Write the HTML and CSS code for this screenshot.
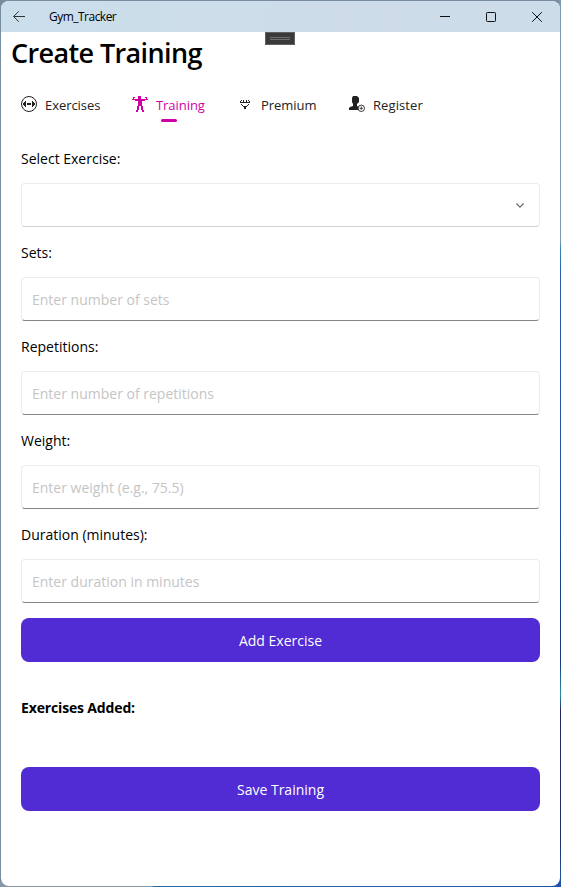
FILE: index.html
```html
<!DOCTYPE html>
<html lang="en">
<head>
<meta charset="utf-8">
<title>Gym_Tracker</title>
<link rel="stylesheet" href="styles.css">
</head>
<body>
<div class="window">
  <header class="titlebar">
    <svg class="back" width="12" height="12" viewBox="0 0 12 12"><path d="M12 5.5H.8M5.8.3.6 5.5l5.2 5.2"/></svg>
    <span class="app-name">Gym_Tracker</span>
    <div class="controls">
      <svg width="10" height="10" viewBox="0 0 10 10"><path d="M0 4.5H10"/></svg>
      <svg width="10" height="10" viewBox="0 0 10 10"><rect x=".5" y=".5" width="9" height="9" rx=".8"/></svg>
      <svg width="10" height="10" viewBox="0 0 10 10"><path d="M.2.2 9.8 9.8M9.8.2.2 9.8"/></svg>
    </div>
  </header>
  <div class="debug-handle"></div>
  <h1>Create Training</h1>
  <nav class="tabs">
    <a class="tab exercises">
      <svg width="16" height="16" viewBox="0 0 16 16"><circle cx="8" cy="8" r="7.5" fill="none" stroke="currentColor"/><path d="M2 7h1V6h1V5h1v6H4v-1H3V9H2zM6 7h4v2H6zM11 5h1v1h1v1h1v2h-1v1h-1v1h-1z" fill="currentColor"/></svg>
      <span>Exercises</span>
    </a>
    <a class="tab training active">
      <svg width="16" height="16" viewBox="0 0 16 16"><path d="M1 1h2v1H2v1h4V0h3v3h5V2h-1V1h2v2h1v1h-3v1h-3v5h1v4h1v2h-2v-2h-1v-4H7v4H6v2H4v-2h1v-4h1V5H3V4H0V3h1z" fill="currentColor"/></svg>
      <span>Training</span>
    </a>
    <a class="tab premium">
      <svg width="16" height="16" viewBox="0 0 16 16"><path d="M4 4h1v1H4zM6 4h1v3H6zM9 4h1v3H9zM11 4h1v1h-1zM3 5h1v1H3zM12 5h1v1h-1zM3 6h10v1H3zM4 8h1v1H4zM11 8h1v1h-1zM5 9h1v1H5zM10 9h1v1h-1zM6 10h4v1H6zM7 11h2v2H7z" fill="currentColor"/></svg>
      <span>Premium</span>
    </a>
    <a class="tab register">
      <svg width="16" height="16" viewBox="0 0 16 16"><path d="M4 0h4l2 2v4L8 8v2l2 1v3H0v-2l1-1 3-1V8L3 6V2z" fill="currentColor"/><circle cx="12.3" cy="12.3" r="3.2" fill="#fff" stroke="currentColor" stroke-width=".9"/><path d="M10.5 12.3H14M12.3 10.5V14" stroke="currentColor" stroke-width=".8"/></svg>
      <span>Register</span>
    </a>
  </nav>
  <main class="form">
    <label>Select Exercise:</label>
    <div class="field picker"><svg width="8" height="5" viewBox="0 0 8 5"><path d="M.4.5 4 4.1 7.6.5"/></svg></div>
    <label>Sets:</label>
    <div class="field">Enter number of sets</div>
    <label>Repetitions:</label>
    <div class="field">Enter number of repetitions</div>
    <label>Weight:</label>
    <div class="field">Enter weight (e.g., 75.5)</div>
    <label>Duration (minutes):</label>
    <div class="field">Enter duration in minutes</div>
    <button>Add Exercise</button>
    <h2>Exercises Added:</h2>
    <button>Save Training</button>
  </main>
</div>
</body>
</html>
```
FILE: styles.css
```css
* { box-sizing: border-box; }
body {
  margin: 0;
  height: 887px;
  padding: 1px;
  overflow: hidden;
  font: 14px/20px "Open Sans", sans-serif;
  color: #000;
  background:
    linear-gradient(#7d9bb0 0 240px, #348bb5 248px, #2859ae 275px, #2050a0 500px, #15377d 660px, #2a8dab 695px, #22285d 710px, #22306a 840px, #1b5aac 887px) right / 2px 100% no-repeat,
    linear-gradient(90deg, #8698a7 152px, #286aa8 154px, #2450a8) bottom / 100% 6px no-repeat,
    #788d9f;
}
.window {
  position: relative;
  height: 885px;
  overflow: hidden;
  background: #fff;
  border-radius: 8px;
}
.titlebar {
  display: flex;
  align-items: center;
  height: 31px;
  padding: 0 18px 0 12px;
  background: linear-gradient(90deg, #cbdeeb, #cedce9 60%, #ccdce8);
}
.titlebar svg { fill: none; stroke: #111; stroke-width: 1; }
.titlebar .back { stroke: #333; }
.app-name {
  margin-left: 24px;
  font: 12px/16px "Open Sans", sans-serif;
  letter-spacing: -.52px;
}
.controls { display: flex; gap: 36px; margin-left: auto; }
.debug-handle {
  position: absolute;
  left: 264px;
  top: 31px;
  width: 30px;
  height: 13px;
  border: 1px solid #606060;
  background: linear-gradient(#707070 0 1px, transparent 1px 2px, #707070 2px 3px) center / 20px 3px no-repeat, #3a3a3a;
}
h1 {
  margin: 0 0 0 10px;
  height: 44px;
  font: 600 27px/41px "Open Sans", sans-serif;
  letter-spacing: -.62px;
}
.tabs { display: flex; height: 48px; padding: 20px 0 0 20px; color: #222; }
.tab {
  position: relative;
  display: flex;
  gap: 8px;
  height: 28px;
  font-size: 13px;
  line-height: 18px;
  letter-spacing: -.05px;
}
.tab svg { flex: none; }
.exercises { width: 111px; }
.training { width: 105px; }
.premium { width: 112px; }
.register { letter-spacing: .1px; }
.active { color: #d000a6; }
.active::after {
  content: "";
  position: absolute;
  left: 29px;
  top: 23px;
  width: 16px;
  height: 3px;
  border-radius: 2px;
  background: #d000a6;
}
.form {
  display: flex;
  flex-direction: column;
  gap: 15px;
  padding: 24px 20px 0;
}
label { height: 20px; line-height: 22px; }
.field {
  height: 44px;
  padding: 0 10px;
  border: 1px solid #ececec;
  border-bottom-color: #868686;
  border-radius: 4px;
  line-height: 44px;
  color: #c5c5c5;
}
.picker {
  display: flex;
  align-items: center;
  justify-content: flex-end;
  padding-right: 15px;
  border-bottom-color: #d0d0d0;
}
.picker svg { fill: none; stroke: #666; stroke-width: 1.1; }
button {
  height: 44px;
  padding: 2px 0 0;
  border: 0;
  border-radius: 8px;
  background: #512bd4;
  color: #fff;
  font: 14px/42px "Open Sans", sans-serif;
}
h2 {
  margin: 20px 0 25px;
  height: 30px;
  font: 700 14px/22px "Open Sans", sans-serif;
  letter-spacing: -.15px;
}
```
